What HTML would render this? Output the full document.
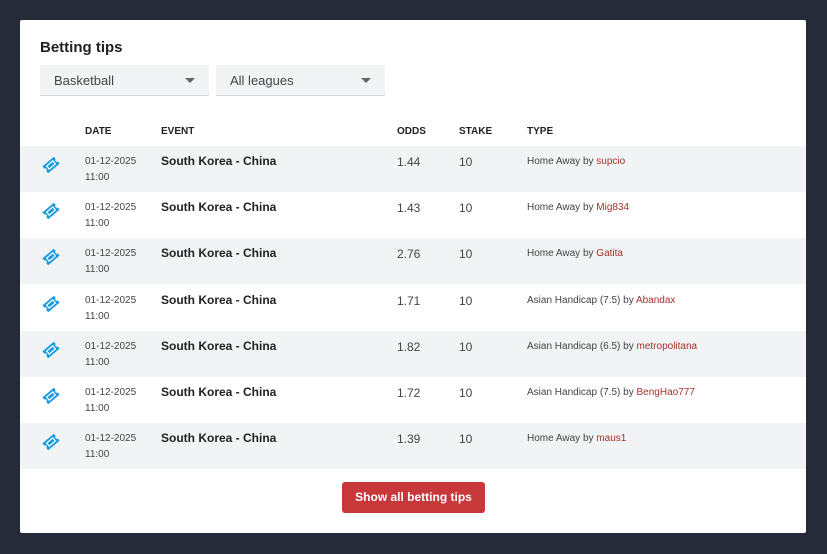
<!DOCTYPE html>
<html><head><style>
body{margin:0;width:827px;height:554px;background:#252b38;font-family:"Liberation Sans",sans-serif;overflow:hidden;position:relative}
.card{position:absolute;left:20px;top:20px;width:786px;height:513px;background:#fff;border-radius:2px}
h1{position:absolute;left:20px;top:19px;margin:0;font-size:15px;font-weight:bold;color:#222}
.sel{position:absolute;top:45px;height:31px;background:#f2f3f5;border-bottom:1px solid #d8d8d8;font-size:13px;color:#444;line-height:31px;padding-left:14px;box-sizing:border-box}
.sel:after{content:"";position:absolute;right:14px;top:13px;border:5px solid transparent;border-top:5px solid #666}
.hd{position:absolute;top:106px;font-size:10px;font-weight:bold;color:#222}
.row{position:absolute;left:0;width:786px;height:46px}
.row.s{background:#f2f3f5}
.row div{position:absolute}
.d{left:65px;top:8px;font-size:10px;line-height:16px;color:#444}
.e{left:141px;top:8px;font-size:12px;font-weight:bold;color:#222}
.o{left:377px;top:9px;font-size:12px;color:#444}
.st{left:439px;top:9px;font-size:12px;color:#444}
.t{left:507px;top:10px;font-size:10px;color:#444}
.t span{color:#a8302a}
.ic{left:21px;top:9px}
.btn{position:absolute;width:143px;height:31px;background:#c8373a;border-radius:3px;color:#fff;font-size:12px;font-weight:bold;text-align:center;line-height:31px}
</style></head><body>
<div class="card">
<h1>Betting tips</h1>
<div class="sel" style="left:20px;width:169px">Basketball</div>
<div class="sel" style="left:196px;width:169px">All leagues</div>
<div class="hd" style="left:65px">DATE</div>
<div class="hd" style="left:141px">EVENT</div>
<div class="hd" style="left:377px">ODDS</div>
<div class="hd" style="left:439px">STAKE</div>
<div class="hd" style="left:507px">TYPE</div>
</div>
<div style="position:absolute;left:20px;top:20px">
<script>
var rows=[["1.44","Home Away by ","supcio"],["1.43","Home Away by ","Mig834"],["2.76","Home Away by ","Gatita"],["1.71","Asian Handicap (7.5) by ","Abandax"],["1.82","Asian Handicap (6.5) by ","metropolitana"],["1.72","Asian Handicap (7.5) by ","BengHao777"],["1.39","Home Away by ","maus1"]];
var ic='<svg width="20" height="20" viewBox="0 0 20 20"><g transform="rotate(-40 10 10)"><path d="M2.5 5.5h15v3a1.5 1.5 0 0 0 0 3v3h-15v-3a1.5 1.5 0 0 0 0-3z" fill="#1a9be0"/><rect x="6" y="8" width="8" height="4" fill="none" stroke="#fff" stroke-width="1.2"/></g></svg>';
rows.forEach(function(r,i){document.write('<div class="row'+(i%2==0?' s':'')+'" style="top:'+(126+i*46.2)+'px"><div class="ic">'+ic+'</div><div class="d">01-12-2025<br>11:00</div><div class="e">South Korea - China</div><div class="o">'+r[0]+'</div><div class="st">10</div><div class="t">'+r[1]+'<span>'+r[2]+'</span></div></div>')});
</script>
</div>
<div class="btn" style="left:342px;top:482px">Show all betting tips</div>
</body></html>
